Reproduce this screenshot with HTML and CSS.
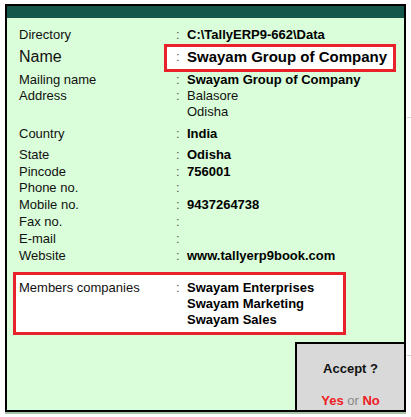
FILE: index.html
```html
<!DOCTYPE html>
<html>
<head>
<meta charset="utf-8">
<link rel="stylesheet" href="styles.css">
</head>
<body>
<div class="frame">
  <div class="header"></div>
  <div class="content">
    <div class="row"><span class="label">Directory</span><span class="colon">:</span><span class="value">C:\TallyERP9-662\Data</span></div>
    <div class="row name-row">
      <span class="label name-label">Name</span>
      <div class="name-box"><span class="colon">:</span><span class="value name-value">Swayam Group of Company</span></div>
    </div>
    <div class="row tight"><span class="label">Mailing name</span><span class="colon">:</span><span class="value">Swayam Group of Company</span></div>
    <div class="row tight"><span class="label">Address</span><span class="colon">:</span><span class="value plain">Balasore<br>Odisha</span></div>
    <div class="row tight country"><span class="label">Country</span><span class="colon">:</span><span class="value">India</span></div>
    <div class="group">
      <div class="row"><span class="label">State</span><span class="colon">:</span><span class="value">Odisha</span></div>
      <div class="row"><span class="label">Pincode</span><span class="colon">:</span><span class="value">756001</span></div>
      <div class="row"><span class="label">Phone no.</span><span class="colon">:</span><span class="value"></span></div>
      <div class="row"><span class="label">Mobile no.</span><span class="colon">:</span><span class="value">9437264738</span></div>
      <div class="row"><span class="label">Fax no.</span><span class="colon">:</span><span class="value"></span></div>
      <div class="row"><span class="label">E-mail</span><span class="colon">:</span><span class="value"></span></div>
      <div class="row"><span class="label">Website</span><span class="colon">:</span><span class="value">www.tallyerp9book.com</span></div>
    </div>
    <div class="members-box">
      <div class="row tight"><span class="label members-label">Members companies</span><span class="colon">:</span><span class="value">Swayam Enterprises<br>Swayam Marketing<br>Swayam Sales</span></div>
    </div>
    <div class="accept">
      <div class="accept-title">Accept ?</div>
      <div class="accept-opts"><span class="opt">Yes</span> <span class="or">or</span> <span class="opt">No</span></div>
    </div>
  </div>
</div>
</body>
</html>
```
FILE: styles.css
```css
html, body {
  margin: 0;
  padding: 0;
}
body {
  width: 411px;
  height: 417px;
  overflow: hidden;
  font-family: "Liberation Sans", Arial, sans-serif;
  color: #111;
  background:
    linear-gradient(#d4d4d4, #d4d4d4) 407px 117px / 4px 1px no-repeat,
    linear-gradient(#d4d4d4, #d4d4d4) 407px 355px / 4px 1px no-repeat,
    #ffffff;
}
.frame {
  margin: 4px 0 0 5px;
  width: 401px;
  height: 408px;
  box-sizing: border-box;
  border: 2px solid #000;
  background: #dafed9;
  display: flex;
  flex-direction: column;
  box-shadow: 0 2px 0 #a8c2a8;
}
.header {
  height: 12px;
  background: #13574a;
  flex: none;
}
.content {
  flex: 1;
  display: flex;
  flex-direction: column;
  padding: 9px 0 0 0;
}
.row {
  display: flex;
  font-size: 13px;
  line-height: 16.8px;
  padding-left: 12px;
}
.row.tight {
  line-height: 16px;
}
.label {
  width: 157px;
  flex: none;
}
.colon {
  width: 11px;
  flex: none;
  color: #555;
}
.value {
  font-weight: bold;
  color: #000;
}
.value.plain {
  font-weight: normal;
  color: #111;
}
.name-row {
  align-items: center;
}
.name-label {
  width: 145px;
  font-size: 16px;
}
.name-box {
  display: flex;
  align-items: center;
  width: 232px;
  height: 28px;
  box-sizing: border-box;
  border: 3px solid #e8212a;
  background: #ffffff;
  padding-left: 9px;
}
.name-value {
  font-size: 15px;
}
.country {
  margin-top: 6px;
}
.group {
  margin-top: 5px;
}
.members-box {
  margin: 8px 0 0 6px;
  width: 333px;
  height: 63px;
  box-sizing: border-box;
  border: 3px solid #e8212a;
  background: #ffffff;
  padding-top: 5px;
}
.members-box .row {
  padding-left: 3px;
}
.members-label {
  width: 157px;
}
.accept {
  margin-top: auto;
  align-self: flex-end;
  width: 109px;
  height: 68px;
  box-sizing: border-box;
  border: 2px solid #000;
  border-right: none;
  border-bottom: none;
  background: #d9d9d9;
  display: flex;
  flex-direction: column;
  align-items: center;
  font-size: 13px;
  font-weight: bold;
}
.accept-title {
  margin-top: 17px;
  color: #111;
}
.accept-opts {
  margin-top: auto;
  margin-bottom: 2px;
}
.opt {
  color: #ee1c24;
}
.or {
  color: #888;
  font-weight: normal;
}
```
